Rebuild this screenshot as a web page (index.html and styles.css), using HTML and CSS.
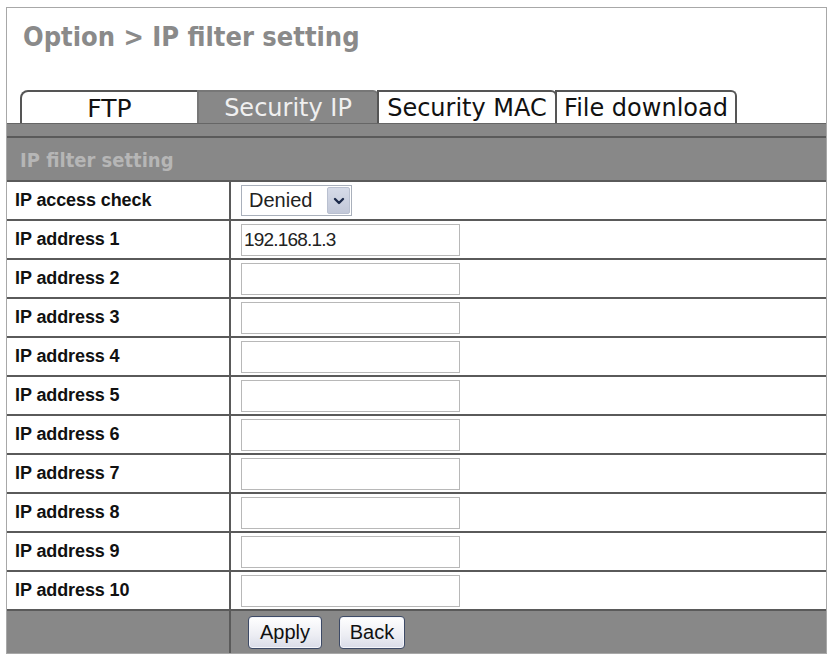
FILE: index.html
```html
<!DOCTYPE html>
<html>
<head>
<meta charset="utf-8">
<link rel="stylesheet" href="styles.css">
</head>
<body>
<div class="frame">
  <h1 class="title">Option &gt; IP filter setting</h1>
  <div class="tabs">
    <div class="tab tab-first">FTP</div>
    <div class="tab tab-active">Security IP</div>
    <div class="tab">Security MAC</div>
    <div class="tab">File download</div>
  </div>
  <div class="tabbar"></div>
  <div class="section">IP filter setting</div>
  <div class="rows">
    <div class="row">
      <div class="label">IP access check</div>
      <div class="value">
        <div class="select"><span class="select-text">Denied</span><span class="select-arrow"><svg width="14" height="14" viewBox="0 0 14 14"><path d="M3 5 L7 9 L11 5" fill="none" stroke="#1c2a4a" stroke-width="2.4" stroke-linecap="round" stroke-linejoin="round"/></svg></span></div>
      </div>
    </div>
    <div class="row"><div class="label">IP address 1</div><div class="value"><div class="input">192.168.1.3</div></div></div>
    <div class="row"><div class="label">IP address 2</div><div class="value"><div class="input"></div></div></div>
    <div class="row"><div class="label">IP address 3</div><div class="value"><div class="input"></div></div></div>
    <div class="row"><div class="label">IP address 4</div><div class="value"><div class="input"></div></div></div>
    <div class="row"><div class="label">IP address 5</div><div class="value"><div class="input"></div></div></div>
    <div class="row"><div class="label">IP address 6</div><div class="value"><div class="input"></div></div></div>
    <div class="row"><div class="label">IP address 7</div><div class="value"><div class="input"></div></div></div>
    <div class="row"><div class="label">IP address 8</div><div class="value"><div class="input"></div></div></div>
    <div class="row"><div class="label">IP address 9</div><div class="value"><div class="input"></div></div></div>
    <div class="row"><div class="label">IP address 10</div><div class="value"><div class="input"></div></div></div>
    <div class="row row-buttons">
      <div class="label"></div>
      <div class="value buttons">
        <button class="btn btn-apply">Apply</button>
        <button class="btn btn-back">Back</button>
      </div>
    </div>
  </div>
</div>
</body>
</html>
```

FILE: styles.css
```css
* { box-sizing: border-box; }
html, body { margin: 0; padding: 0; background: #fff; }
body { font-family: "Liberation Sans", Arial, sans-serif; }

.frame {
  margin: 7px 0 0 6px;
  width: 821px;
  border: 1px solid #a8a8a8;
  background: #fff;
}

.title {
  margin: 0;
  padding: 12px 0 36px 16px;
  font-family: "DejaVu Sans Condensed", "DejaVu Sans", sans-serif;
  font-stretch: condensed;
  font-weight: bold;
  font-size: 27px;
  line-height: 34px;
  color: #8a8a8a;
}

.tabs {
  display: flex;
  padding-left: 13px;
  height: 33px;
  align-items: flex-end;
}
.tab {
  height: 33px;
  border: 2px solid #555;
  border-bottom: 0;
  border-top-right-radius: 6px;
  background: #fff;
  color: #111;
  font-family: "DejaVu Sans", sans-serif;
  font-size: 24px;
  line-height: 29px;
  padding-top: 2px;
  text-align: center;
  white-space: nowrap;
  margin-left: -2px;
}
.tab-first { width: 179px; margin-left: 0; border-radius: 8px 0 0 0; font-size: 25px; }
.tab-active { width: 182px; background: #888; border-color: #777; color: #f0f0f0; }
.tab:nth-child(3) { width: 180px; }
.tab:nth-child(4) { width: 182px; }

.tabbar {
  height: 15px;
  background: #888;
  border-top: 1px solid #666;
  border-bottom: 2px solid #5a5a5a;
}

.section {
  height: 44px;
  background: #888;
  border-bottom: 2px solid #5a5a5a;
  padding: 10px 0 0 13px;
  font-family: "DejaVu Sans Condensed", "DejaVu Sans", sans-serif;
  font-stretch: condensed;
  font-weight: bold;
  font-size: 20px;
  line-height: 24px;
  color: #b6b6b6;
}

.row {
  display: flex;
  height: 39px;
  border-bottom: 2px solid #5a5a5a;
}
.label {
  width: 224px;
  flex: none;
  border-right: 2px solid #5a5a5a;
  padding-left: 8px;
  font-weight: bold;
  font-size: 18px;
  line-height: 37px;
  color: #111;
  letter-spacing: -0.1px;
}
.value {
  flex: 1;
  display: flex;
  align-items: center;
  padding-left: 10px;
}

.input {
  width: 219px;
  height: 32px;
  border: 1px solid #b8b8b8;
  background: #fff;
  padding-left: 2px;
  font-size: 19px;
  line-height: 30px;
  letter-spacing: -0.8px;
  color: #222;
}

.select {
  width: 111px;
  height: 31px;
  border: 1px solid #a9b0bb;
  background: #fff;
  display: flex;
  align-items: stretch;
  padding: 1px;
}
.select-text {
  flex: 1;
  padding-left: 6px;
  font-size: 20px;
  line-height: 27px;
  color: #222;
}
.select-arrow {
  width: 23px;
  background: linear-gradient(#d6dbe8, #c2c8d8);
  border: 1px solid #b9c0d0;
  border-radius: 2px;
  display: flex;
  align-items: center;
  justify-content: center;
}

.row-buttons {
  height: 42px;
  border-bottom: 0;
  background: #888;
}
.row-buttons .label { line-height: 42px; }
.buttons {
  padding-left: 17px;
  gap: 17px;
}
.btn {
  height: 33px;
  padding: 0;
  border: 1px solid #3d4a66;
  border-radius: 4px;
  background: linear-gradient(#ffffff, #ecedf3 60%, #d9dce8);
  box-shadow: inset 0 0 0 1px #f4f5fa;
  font-family: "Liberation Sans", Arial, sans-serif;
  font-size: 20px;
  color: #111;
}
.btn-apply { width: 74px; }
.btn-back { width: 66px; }
```
